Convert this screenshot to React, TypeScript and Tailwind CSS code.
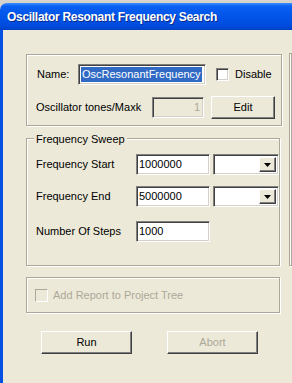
import React from "react"

const sunken =
  "border border-t-[#808080] border-l-[#808080] border-r-white border-b-white shadow-[inset_1px_1px_0_#404040,inset_-1px_-1px_0_#d4d0c8]"
const raised =
  "border border-t-white border-l-white border-r-[#404040] border-b-[#404040] shadow-[inset_-1px_-1px_0_#808080]"
const etched = "border border-[#aca899] shadow-[1px_1px_0_#fff,inset_1px_1px_0_#fff]"

function Combo() {
  return (
    <div className={`ml-[3px] w-[66px] h-[21px] bg-white flex justify-end items-stretch p-[2px] ${sunken}`}>
      <div className={`w-[17px] bg-[#ece9d8] flex items-center justify-center ${raised}`}>
        <svg width="7" height="4" viewBox="0 0 7 4">
          <path d="M0 0h7L3.5 4z" fill="#000" />
        </svg>
      </div>
    </div>
  )
}

function Field({ value, w = "w-[74px]" }: { value: string; w?: string }) {
  return (
    <div className={`${w} h-[21px] bg-white flex items-center pl-[2px] pb-[1px] ${sunken}`}>
      <span className="leading-none">{value}</span>
    </div>
  )
}

export default function App() {
  return (
    <div
      className="w-[292px] h-[383px] overflow-hidden flex flex-col bg-[#d6d3ce] text-[11px] text-black"
      style={{ fontFamily: '"Liberation Sans", Arial, sans-serif' }}
    >
      <div className="h-[3px] shrink-0" />
      <div className="h-[27px] shrink-0 rounded-tl-[7px] bg-[linear-gradient(180deg,#3d8eff_0%,#0a60f2_12%,#0055e8_50%,#004bdc_85%,#0040c4_100%)] flex items-center pl-[7px]">
        <span className="text-white font-bold text-[12px] tracking-[-0.3px] [text-shadow:1px_1px_0_#0a2a8a] whitespace-nowrap">
          Oscillator Resonant Frequency Search
        </span>
      </div>
      <div className="flex-1 bg-[#ece9d8] border-l-[3px] border-[#0050e4] pt-[24px]">
        <div className="flex">
          <div className="ml-[23px] w-[257px]">
            {/* name group */}
            <div className={`w-[256px] h-[72px] pl-[10px] pt-[9px] ${etched}`}>
              <div className="flex items-center">
                <span className="w-[41px]">Name:</span>
                <div className={`w-[128px] h-[21px] bg-white flex items-center pl-[2px] ${sunken}`}>
                  <span className="bg-[#316ac5] text-white px-[1px] leading-[15px]">OscResonantFrequency</span>
                </div>
                <div className={`ml-[10px] w-[13px] h-[13px] bg-white ${sunken}`} />
                <span className="ml-[6px]">Disable</span>
              </div>
              <div className="flex items-center mt-[11px]">
                <span className="w-[116px] -ml-[1px]">Oscillator tones/Maxk</span>
                <div className={`w-[52px] h-[21px] bg-[#ece9d8] flex items-center justify-end pr-[3px] text-[#aca899] ${sunken}`}>
                  1
                </div>
                <button className={`ml-[7px] w-[64px] h-[23px] bg-[#ece9d8] text-[11px] ${raised}`}>Edit</button>
              </div>
            </div>

            {/* frequency sweep */}
            <div className={`relative mt-[12px] w-[254px] h-[128px] pl-[9px] pt-[15px] ${etched}`}>
              <span className="absolute -top-[8px] left-[7px] bg-[#ece9d8] px-[2px]">Frequency Sweep</span>
              <div className="flex items-center">
                <span className="w-[100px]">Frequency Start</span>
                <Field value="1000000" />
                <Combo />
              </div>
              <div className="flex items-center mt-[11px]">
                <span className="w-[100px]">Frequency End</span>
                <Field value="5000000" />
                <Combo />
              </div>
              <div className="flex items-center mt-[14px]">
                <span className="w-[100px]">Number Of Steps</span>
                <Field value="1000" />
              </div>
            </div>
          </div>
          <div className={`ml-[7px] w-[40px] h-[213px] -mt-[1px] ${etched}`} />
        </div>

        {/* report group */}
        <div className={`ml-[23px] mt-[11px] w-[254px] h-[36px] flex items-center pl-[8px] ${etched}`}>
          <div className="w-[13px] h-[13px] border border-t-[#aca899] border-l-[#aca899] border-r-white border-b-white bg-[#ece9d8]" />
          <span className="ml-[5px] text-[#aca899]">Add Report to Project Tree</span>
        </div>

        <div className="flex mt-[18px] ml-[38px]">
          <button className={`w-[91px] h-[23px] bg-[#ece9d8] text-[11px] ${raised}`}>Run</button>
          <button className={`ml-[35px] w-[91px] h-[23px] bg-[#ece9d8] text-[11px] text-[#aca899] ${raised}`}>
            Abort
          </button>
        </div>
      </div>
    </div>
  )
}
